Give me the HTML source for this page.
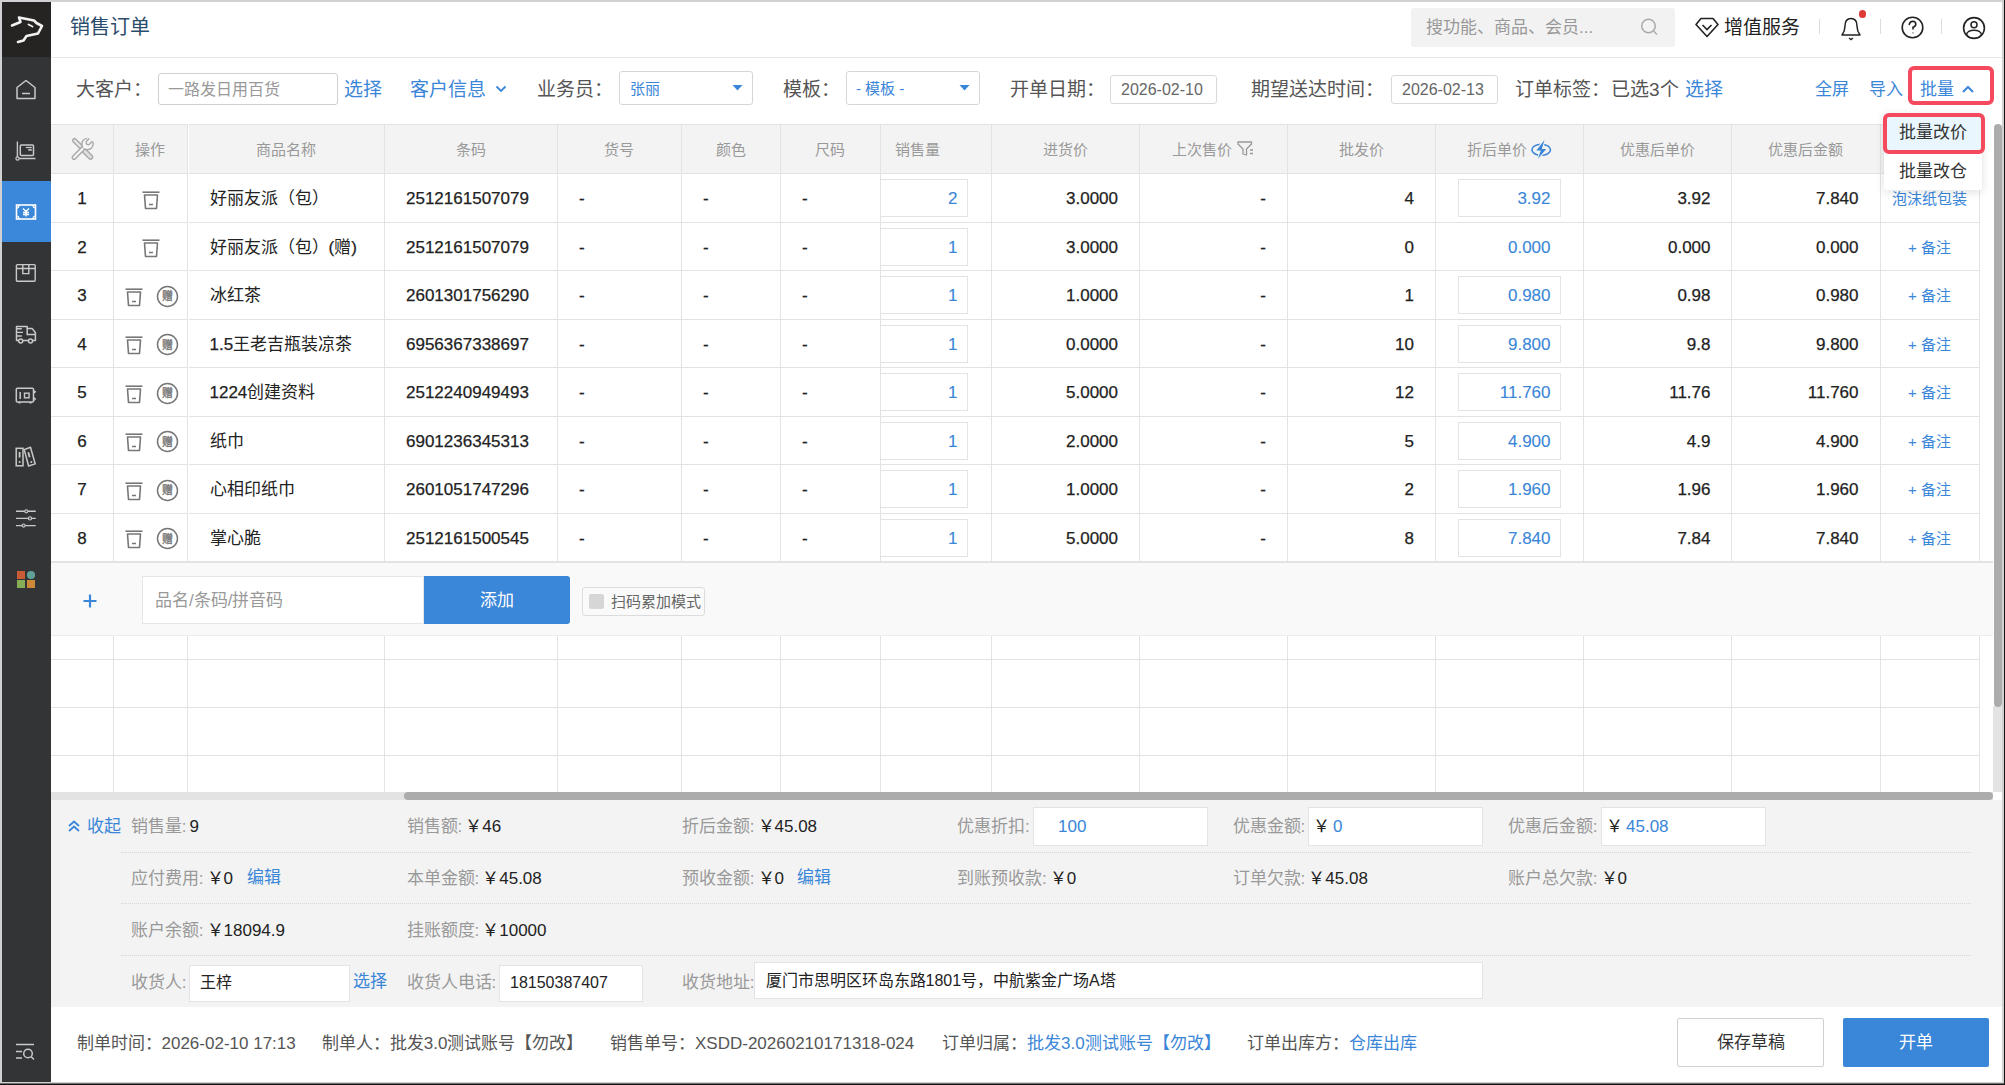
<!DOCTYPE html><html lang="zh-CN"><head><meta charset="utf-8"><style>
*{margin:0;padding:0;box-sizing:border-box}
html,body{width:2005px;height:1085px;overflow:hidden;background:#fff}
body{position:relative;font-family:"Liberation Sans",sans-serif}
.a{position:absolute;white-space:nowrap}
.c{-webkit-text-stroke:0}
</style></head><body>
<div class="a" style="left:0px;top:0px;width:2005px;height:2px;background:#d1d0d2"></div>
<div class="a" style="left:0px;top:0px;width:2px;height:1085px;background:#d1d0d2"></div>
<div class="a" style="left:2002px;top:0px;width:2px;height:1085px;background:#d1d0d2"></div>
<div class="a" style="left:2004px;top:0px;width:1px;height:1085px;background:#151515"></div>
<div class="a" style="left:0px;top:1082px;width:2004px;height:1px;background:#d1d0d2"></div>
<div class="a" style="left:0px;top:1083px;width:2004px;height:1px;background:#707070"></div>
<div class="a" style="left:0px;top:1084px;width:2005px;height:1px;background:#151515"></div>
<div class="a" style="left:2px;top:2px;width:49px;height:1080px;background:#333436"></div>
<div class="a" style="left:2px;top:2px;width:49px;height:55px;background:#252423"></div>
<div class="a" style="left:2px;top:181px;width:49px;height:61px;background:#3b87d9"></div>
<svg class="a" style="left:2px;top:2px;" width="49" height="55" viewBox="0 0 49 55" fill="none"><path d="M10 23.5 L18.5 20 L17 15.5 L32 18.5 L34.5 21 L40 24 L36 31.5 L24.5 34 L21.5 38.5 L16 40" stroke="#f2f2f2" stroke-width="2.6" stroke-linejoin="round" stroke-linecap="round"/><path d="M26.5 22.5 L30.5 24.5" stroke="#f2f2f2" stroke-width="1.8" stroke-linecap="round"/></svg>
<svg class="a" style="left:14px;top:78px;" width="24" height="24" viewBox="0 0 24 24" fill="none"><path d="M3 9.5 L12 2.5 L21 9.5 V20.5 H3 Z" stroke="#c9c9c9" stroke-width="1.5" stroke-linejoin="round"/><path d="M8 15.5 H16" stroke="#c9c9c9" stroke-width="1.5"/></svg>
<svg class="a" style="left:14px;top:139px;" width="24" height="24" viewBox="0 0 24 24" fill="none"><path d="M3.4 2.5 V19.5 H21.5" stroke="#c9c9c9" stroke-width="1.4"/><rect x="6.3" y="5.9" width="13.2" height="10.6" rx="1" stroke="#c9c9c9" stroke-width="1.5"/><path d="M11.8 8.5 H17.8" stroke="#c9c9c9" stroke-width="1.3"/><path d="M14.2 10.9 H17.8" stroke="#c9c9c9" stroke-width="1.6"/><circle cx="3.5" cy="19.5" r="1.6" fill="#333436" stroke="#c9c9c9" stroke-width="1.2"/></svg>
<svg class="a" style="left:14px;top:200px;" width="24" height="24" viewBox="0 0 24 24" fill="none"><rect x="2.5" y="5" width="19" height="14" stroke="#fff" stroke-width="1.6"/><path d="M9 8.5 L12 11.5 L15 8.5 M12 11.5 V16.5 M9 12.5 H15 M9 14.5 H15" stroke="#fff" stroke-width="1.4"/><path d="M2.5 8 Q5 8 5 5 M21.5 8 Q19 8 19 5 M2.5 16 Q5 16 5 19 M21.5 16 Q19 16 19 19" stroke="#fff" stroke-width="1.2"/></svg>
<svg class="a" style="left:14px;top:261px;" width="24" height="24" viewBox="0 0 24 24" fill="none"><rect x="2.4" y="3.6" width="18.8" height="16.7" rx="1" stroke="#c9c9c9" stroke-width="1.4"/><path d="M2.4 7.5 H21.2 M8.8 3.6 V12.6 H14.8 V3.6" stroke="#c9c9c9" stroke-width="1.4"/></svg>
<svg class="a" style="left:14px;top:322px;" width="24" height="24" viewBox="0 0 24 24" fill="none"><path d="M2.5 18.5 V4.5 H13.2 V6.6 H18.3 L21.4 10.8 V18.5 Z" stroke="#c9c9c9" stroke-width="1.5" stroke-linejoin="round"/><path d="M13.2 6.6 V12.5 H21.4" stroke="#c9c9c9" stroke-width="1.5"/><path d="M3 6.8 H7.8 M3 10.4 H9 M3 14 H7.8" stroke="#c9c9c9" stroke-width="1.4"/><circle cx="6.7" cy="19" r="2" fill="#333436" stroke="#c9c9c9" stroke-width="1.5"/><circle cx="16.5" cy="19" r="2" fill="#333436" stroke="#c9c9c9" stroke-width="1.5"/></svg>
<svg class="a" style="left:14px;top:384px;" width="24" height="24" viewBox="0 0 24 24" fill="none"><rect x="2.3" y="4.3" width="17.2" height="13.8" rx="1" stroke="#c9c9c9" stroke-width="1.5"/><path d="M19.5 6.5 L21.4 7.8 L19.5 9.2 M19.5 13.6 L21.4 15 L19.5 16.4" stroke="#c9c9c9" stroke-width="1.4" stroke-linejoin="round"/><path d="M6.2 8 V15" stroke="#c9c9c9" stroke-width="1.5"/><path d="M5.5 18.1 V19.6 M16.5 18.1 V19.6" stroke="#c9c9c9" stroke-width="2"/><rect x="10.5" y="9.2" width="4.6" height="4.6" stroke="#c9c9c9" stroke-width="1.4"/></svg>
<svg class="a" style="left:14px;top:445px;" width="24" height="24" viewBox="0 0 24 24" fill="none"><rect x="2.2" y="3.3" width="6.8" height="17.5" stroke="#c9c9c9" stroke-width="1.5"/><path d="M10.2 4.6 L16.5 2.2 L21.2 18.9 L14.6 21 Z" stroke="#c9c9c9" stroke-width="1.5" stroke-linejoin="round"/><path d="M5.6 7 V12.5 M14.3 7.2 L15.6 12.3" stroke="#c9c9c9" stroke-width="1.8"/><circle cx="5.6" cy="17" r="1" fill="#c9c9c9"/><circle cx="17.3" cy="17" r="1" fill="#c9c9c9"/></svg>
<svg class="a" style="left:14px;top:507px;" width="24" height="24" viewBox="0 0 24 24" fill="none"><path d="M2 4.3 H21.7 M2 11.4 H21.7 M2 18.6 H21.7" stroke="#c9c9c9" stroke-width="1.4"/><circle cx="12.3" cy="4.3" r="1.6" fill="#555" stroke="#c9c9c9" stroke-width="1.1"/><circle cx="16" cy="11.4" r="1.6" fill="#555" stroke="#c9c9c9" stroke-width="1.1"/><circle cx="9.6" cy="18.6" r="1.6" fill="#555" stroke="#c9c9c9" stroke-width="1.1"/></svg>
<div class="a" style="left:17px;top:571px;width:7.5px;height:7.5px;background:#c95b36"></div>
<div class="a" style="left:27px;top:571px;width:7.5px;height:7.5px;background:#5fa195;border-radius:50%"></div>
<div class="a" style="left:17px;top:580px;width:7.5px;height:7.5px;background:#85ae55"></div>
<div class="a" style="left:27px;top:580px;width:7.5px;height:7.5px;background:#cc8a38"></div>
<svg class="a" style="left:14px;top:1041px;" width="24" height="24" viewBox="0 0 24 24" fill="none"><path d="M2 3.5 H20 M2 10.5 H8 M2 17 H8" stroke="#c9c9c9" stroke-width="1.5"/><circle cx="14" cy="12.5" r="4.3" stroke="#c9c9c9" stroke-width="1.5"/><path d="M17.2 15.7 L20 18.5" stroke="#c9c9c9" stroke-width="1.5"/></svg>
<div class="a" style="left:51px;top:57px;width:1951px;height:1px;background:#e8e8e8"></div>
<div class="a" style="left:70px;top:12.3px;line-height:30px;font-size:20px;color:#2c4c6c;"><span class="c">销售订单</span></div>
<div class="a" style="left:1411px;top:8px;width:264px;height:39px;background:#f2f2f2;border-radius:3px"></div>
<div class="a" style="left:1426px;top:13.3px;line-height:30px;font-size:17px;color:#999;-webkit-text-stroke:0;"><span class="c">搜功能、商品、会员</span>...</div>
<svg class="a" style="left:1638px;top:16px;" width="24" height="24" viewBox="0 0 24 24" fill="none"><circle cx="10.5" cy="10" r="6.8" stroke="#aaa" stroke-width="1.5"/><path d="M15.5 15 L19 18.5" stroke="#aaa" stroke-width="1.5"/></svg>
<svg class="a" style="left:1694px;top:16px;" width="26" height="24" viewBox="0 0 26 24" fill="none"><path d="M7 2.5 H19 L24 8.5 L13 20.5 L2 8.5 Z" stroke="#222" stroke-width="1.6" stroke-linejoin="round"/><path d="M8.5 9 L13 13.5 L17.5 9" stroke="#222" stroke-width="1.6"/></svg>
<div class="a" style="left:1724px;top:13.3px;line-height:30px;font-size:19px;color:#222;"><span class="c">增值服务</span></div>
<div class="a" style="left:1819px;top:19px;width:1px;height:15px;background:#ddd"></div>
<div class="a" style="left:1880px;top:19px;width:1px;height:15px;background:#ddd"></div>
<div class="a" style="left:1941px;top:19px;width:1px;height:15px;background:#ddd"></div>
<svg class="a" style="left:1838px;top:14px;" width="28" height="28" viewBox="0 0 28 28" fill="none"><path d="M4 21 Q7 17 7 12 Q7 4.5 13 4.5 Q19 4.5 19 12 Q19 17 22 21 Z" stroke="#222" stroke-width="1.5" stroke-linejoin="round"/><path d="M11 24 L13 25.5 L15 24" stroke="#222" stroke-width="1.4"/></svg>
<div class="a" style="left:1858.5px;top:10.2px;width:7.6px;height:7.6px;background:#e0393a;border-radius:50%"></div>
<svg class="a" style="left:1900px;top:15px;" width="26" height="26" viewBox="0 0 26 26" fill="none"><circle cx="12.5" cy="12.5" r="10.3" stroke="#222" stroke-width="1.6"/><path d="M9.3 9.5 Q9.8 6.3 12.8 6.3 Q15.8 6.5 15.8 9.2 Q15.8 11.3 13 12.3 L13 14" stroke="#222" stroke-width="1.6" stroke-linecap="round"/><circle cx="13" cy="17.8" r="0.6" fill="#222"/></svg>
<svg class="a" style="left:1961px;top:15px;" width="26" height="26" viewBox="0 0 26 26" fill="none"><defs><clipPath id="uc"><circle cx="13" cy="13" r="10.4"/></clipPath></defs><circle cx="13" cy="13" r="10.4" stroke="#222" stroke-width="1.6"/><circle cx="13" cy="9.8" r="3" stroke="#222" stroke-width="1.5"/><ellipse cx="13" cy="19.5" rx="7.3" ry="4.3" stroke="#222" stroke-width="1.5" clip-path="url(#uc)"/></svg>
<div class="a" style="left:76px;top:75.3px;line-height:30px;font-size:19px;color:#555;"><span class="c">大客户：</span></div>
<div class="a" style="left:158px;top:73px;width:180px;height:32px;border:1px solid #d0d0d0;border-radius:3px;background:#fff"></div>
<div class="a" style="left:168px;top:75.3px;line-height:30px;font-size:16px;color:#999;-webkit-text-stroke:0;"><span class="c">一路发日用百货</span></div>
<div class="a" style="left:344px;top:75.3px;line-height:30px;font-size:19px;color:#3a86d8;"><span class="c">选择</span></div>
<div class="a" style="left:410px;top:75.3px;line-height:30px;font-size:19px;color:#3a86d8;"><span class="c">客户信息</span></div>
<svg class="a" style="left:494px;top:82px;" width="14" height="14" viewBox="0 0 14 14" fill="none"><path d="M2.5 4.5 L7 9 L11.5 4.5" stroke="#3a86d8" stroke-width="1.8"/></svg>
<div class="a" style="left:536.5px;top:75.3px;line-height:30px;font-size:19px;color:#555;"><span class="c">业务员：</span></div>
<div class="a" style="left:619px;top:71px;width:134px;height:34px;border:1px solid #d6d6d6;border-radius:3px;background:#fff"></div>
<div class="a" style="left:630px;top:74.3px;line-height:30px;font-size:15px;color:#3a86d8;"><span class="c">张丽</span></div>
<svg class="a" style="left:732px;top:84px;" width="12" height="8" viewBox="0 0 12 8" fill="none"><path d="M0.5 1 H10.5 L5.5 6.5 Z" fill="#3a86d8"/></svg>
<div class="a" style="left:782.5px;top:75.3px;line-height:30px;font-size:19px;color:#555;"><span class="c">模板：</span></div>
<div class="a" style="left:846px;top:71px;width:134px;height:34px;border:1px solid #d6d6d6;border-radius:3px;background:#fff"></div>
<div class="a" style="left:856px;top:74.3px;line-height:30px;font-size:15px;color:#3a86d8;">- <span class="c">模板</span> -</div>
<svg class="a" style="left:959px;top:84px;" width="12" height="8" viewBox="0 0 12 8" fill="none"><path d="M0.5 1 H10.5 L5.5 6.5 Z" fill="#3a86d8"/></svg>
<div class="a" style="left:1010px;top:75.3px;line-height:30px;font-size:19px;color:#555;"><span class="c">开单日期：</span></div>
<div class="a" style="left:1110px;top:75px;width:107px;height:29px;border:1px solid #dadada;border-radius:3px;background:#fff"></div>
<div class="a" style="left:1121px;top:75.3px;line-height:30px;font-size:16px;color:#666;">2026-02-10</div>
<div class="a" style="left:1251px;top:75.3px;line-height:30px;font-size:19px;color:#555;"><span class="c">期望送达时间：</span></div>
<div class="a" style="left:1391px;top:75px;width:107px;height:29px;border:1px solid #dadada;border-radius:3px;background:#fff"></div>
<div class="a" style="left:1402px;top:75.3px;line-height:30px;font-size:16px;color:#666;">2026-02-13</div>
<div class="a" style="left:1515px;top:75.3px;line-height:30px;font-size:19px;color:#555;"><span class="c">订单标签：</span></div>
<div class="a" style="left:1611px;top:75.3px;line-height:30px;font-size:19px;color:#555;"><span class="c">已选</span>3<span class="c">个</span></div>
<div class="a" style="left:1685px;top:75.3px;line-height:30px;font-size:19px;color:#3a86d8;"><span class="c">选择</span></div>
<div class="a" style="left:1815px;top:75.3px;line-height:30px;font-size:17px;color:#3a86d8;"><span class="c">全屏</span></div>
<div class="a" style="left:1869px;top:75.3px;line-height:30px;font-size:17px;color:#3a86d8;"><span class="c">导入</span></div>
<div class="a" style="left:1920px;top:75.3px;line-height:30px;font-size:17px;color:#3a86d8;"><span class="c">批量</span></div>
<svg class="a" style="left:1960px;top:83px;" width="16" height="12" viewBox="0 0 16 12" fill="none"><path d="M3 9 L8 4 L13 9" stroke="#3a86d8" stroke-width="2"/></svg>
<div class="a" style="left:1908px;top:66px;width:86px;height:39px;border:4px solid #f5495e;border-radius:6px"></div>
<div class="a" style="left:51px;top:124px;width:1928px;height:49.5px;background:#f3f3f3"></div>
<div class="a" style="left:51px;top:124px;width:1928px;height:1px;background:#e3e3e3"></div>
<div class="a" style="left:51px;top:173px;width:1928px;height:1px;background:#e3e3e3"></div>
<svg class="a" style="left:69px;top:136px;" width="26" height="26" viewBox="0 0 26 26" fill="none"><path d="M5.5 4.5 L11.5 10.5" stroke="#a8a8a8" stroke-width="5.2" stroke-linecap="round"/><path d="M5.5 4.5 L11.5 10.5" stroke="#e6e6e6" stroke-width="2.4" stroke-linecap="round"/><path d="M15.5 15 L21.5 21" stroke="#a8a8a8" stroke-width="5.6" stroke-linecap="round"/><path d="M15.5 15 L21.5 21" stroke="#dedede" stroke-width="2.8" stroke-linecap="round"/><path d="M5 21.5 L14.5 12" stroke="#a8a8a8" stroke-width="5" stroke-linecap="round"/><path d="M5 21.5 L14.5 12" stroke="#f6f6f6" stroke-width="2.2" stroke-linecap="round"/><circle cx="18.5" cy="8" r="5.6" fill="#f6f6f6" stroke="#a8a8a8" stroke-width="1.4"/><path d="M18.3 1.5 L17.3 6.5 L18.5 9 L21.5 8.7 L25 4.5 L23.5 0 Z" fill="#f3f3f3"/><path d="M20.3 2.4 L17.2 5.6 Q16.8 8.7 19.8 8.8 L23.5 5.3" stroke="#a8a8a8" stroke-width="1.4" fill="none" stroke-linejoin="round"/><path d="M14.5 12 L16.5 10" stroke="#f6f6f6" stroke-width="2.2"/></svg>
<div class="a" style="left:-50.0px;width:400px;text-align:center;top:134.8px;line-height:30px;font-size:15px;color:#999;-webkit-text-stroke:0;"><span class="c">操作</span></div>
<div class="a" style="left:85.5px;width:400px;text-align:center;top:134.8px;line-height:30px;font-size:15px;color:#999;-webkit-text-stroke:0;"><span class="c">商品名称</span></div>
<div class="a" style="left:270.5px;width:400px;text-align:center;top:134.8px;line-height:30px;font-size:15px;color:#999;-webkit-text-stroke:0;"><span class="c">条码</span></div>
<div class="a" style="left:419.0px;width:400px;text-align:center;top:134.8px;line-height:30px;font-size:15px;color:#999;-webkit-text-stroke:0;"><span class="c">货号</span></div>
<div class="a" style="left:530.5px;width:400px;text-align:center;top:134.8px;line-height:30px;font-size:15px;color:#999;-webkit-text-stroke:0;"><span class="c">颜色</span></div>
<div class="a" style="left:630.0px;width:400px;text-align:center;top:134.8px;line-height:30px;font-size:15px;color:#999;-webkit-text-stroke:0;"><span class="c">尺码</span></div>
<div class="a" style="left:865.0px;width:400px;text-align:center;top:134.8px;line-height:30px;font-size:15px;color:#999;-webkit-text-stroke:0;"><span class="c">进货价</span></div>
<div class="a" style="left:1161.0px;width:400px;text-align:center;top:134.8px;line-height:30px;font-size:15px;color:#999;-webkit-text-stroke:0;"><span class="c">批发价</span></div>
<div class="a" style="left:1457.0px;width:400px;text-align:center;top:134.8px;line-height:30px;font-size:15px;color:#999;-webkit-text-stroke:0;"><span class="c">优惠后单价</span></div>
<div class="a" style="left:1605.5px;width:400px;text-align:center;top:134.8px;line-height:30px;font-size:15px;color:#999;-webkit-text-stroke:0;"><span class="c">优惠后金额</span></div>
<div class="a" style="left:895px;top:134.8px;line-height:30px;font-size:15px;color:#999;-webkit-text-stroke:0;"><span class="c">销售量</span></div>
<div class="a" style="left:1002px;width:400px;text-align:center;top:134.8px;line-height:30px;font-size:15px;color:#999;-webkit-text-stroke:0;"><span class="c">上次售价</span></div>
<svg class="a" style="left:1236px;top:140px;" width="20" height="18" viewBox="0 0 20 18" fill="none"><path d="M2 2 H15.5 V4 L10.5 9 V15 L7 14 V9 L2 4 Z" stroke="#999" stroke-width="1.3" stroke-linejoin="round"/><path d="M14 10 H17 M14 13.5 H17" stroke="#999" stroke-width="1.3"/></svg>
<div class="a" style="left:1297px;width:400px;text-align:center;top:134.8px;line-height:30px;font-size:15px;color:#999;-webkit-text-stroke:0;"><span class="c">折后单价</span></div>
<svg class="a" style="left:1529px;top:138px;" width="24" height="23" viewBox="0 0 24 23" fill="none"><ellipse cx="12.2" cy="11.8" rx="9.3" ry="5.5" stroke="#3a86d8" stroke-width="1.6"/><path d="M15.5 2 L7.3 12.6 H11.8 L9 20.8 L17.2 11.1 H12.8 Z" stroke="#f3f3f3" stroke-width="2.2" stroke-linejoin="round"/><path d="M15.5 2 L7.3 12.6 H11.8 L9 20.8 L17.2 11.1 H12.8 Z" fill="#3a86d8"/></svg>
<div class="a" style="left:51px;top:221.5px;width:1928px;height:1px;background:#e3e3e3"></div>
<div class="a" style="left:-118px;width:400px;text-align:center;top:184.05px;line-height:30px;font-size:17px;color:#222;-webkit-text-stroke:0.25px #222;">1</div>
<svg class="a" style="left:140.5px;top:189.95px;" width="20" height="20" viewBox="0 0 20 20" fill="none"><path d="M1.5 2.2 H18.5" stroke="#777" stroke-width="1.6"/><path d="M3.5 5 H16.5 L15.5 18.5 H4.5 Z" stroke="#777" stroke-width="1.6" stroke-linejoin="round"/><path d="M8 14.5 H12" stroke="#777" stroke-width="1.5"/></svg>
<div class="a" style="left:209.5px;top:184.05px;line-height:30px;font-size:17px;color:#222;-webkit-text-stroke:0.25px #222;"><span class="c">好丽友派（包）</span></div>
<div class="a" style="left:406px;top:184.05px;line-height:30px;font-size:17px;color:#222;-webkit-text-stroke:0.25px #222;">2512161507079</div>
<div class="a" style="left:579px;top:184.05px;line-height:30px;font-size:17px;color:#222;-webkit-text-stroke:0.25px #222;">-</div>
<div class="a" style="left:703px;top:184.05px;line-height:30px;font-size:17px;color:#222;-webkit-text-stroke:0.25px #222;">-</div>
<div class="a" style="left:802px;top:184.05px;line-height:30px;font-size:17px;color:#222;-webkit-text-stroke:0.25px #222;">-</div>
<div class="a" style="left:880px;top:179.0px;width:88px;height:38px;border:1px solid #e3e3e3;border-left:none;background:#fff"></div>
<div class="a" style="right:1047.5px;top:184.05px;line-height:30px;font-size:17px;color:#3a86d8;-webkit-text-stroke:0.1px #3a86d8;">2</div>
<div class="a" style="right:887px;top:184.05px;line-height:30px;font-size:17px;color:#222;-webkit-text-stroke:0.25px #222;">3.0000</div>
<div class="a" style="right:739px;top:184.05px;line-height:30px;font-size:17px;color:#222;-webkit-text-stroke:0.25px #222;">-</div>
<div class="a" style="right:591px;top:184.05px;line-height:30px;font-size:17px;color:#222;-webkit-text-stroke:0.25px #222;">4</div>
<div class="a" style="left:1458px;top:179.0px;width:103px;height:38px;border:1px solid #e3e3e3;background:#fff"></div>
<div class="a" style="right:454.5px;top:184.05px;line-height:30px;font-size:17px;color:#3a86d8;-webkit-text-stroke:0.1px #3a86d8;">3.92</div>
<div class="a" style="right:294.5px;top:184.05px;line-height:30px;font-size:17px;color:#222;-webkit-text-stroke:0.25px #222;">3.92</div>
<div class="a" style="right:146.5px;top:184.05px;line-height:30px;font-size:17px;color:#222;-webkit-text-stroke:0.25px #222;">7.840</div>
<div class="a" style="left:1729.5px;width:400px;text-align:center;top:184.05px;line-height:30px;font-size:15px;color:#3a86d8;"><span class="c">泡沫纸包装</span></div>
<div class="a" style="left:51px;top:270.0px;width:1928px;height:1px;background:#e3e3e3"></div>
<div class="a" style="left:-118px;width:400px;text-align:center;top:232.55px;line-height:30px;font-size:17px;color:#222;-webkit-text-stroke:0.25px #222;">2</div>
<svg class="a" style="left:140.5px;top:238.45px;" width="20" height="20" viewBox="0 0 20 20" fill="none"><path d="M1.5 2.2 H18.5" stroke="#777" stroke-width="1.6"/><path d="M3.5 5 H16.5 L15.5 18.5 H4.5 Z" stroke="#777" stroke-width="1.6" stroke-linejoin="round"/><path d="M8 14.5 H12" stroke="#777" stroke-width="1.5"/></svg>
<div class="a" style="left:209.5px;top:232.55px;line-height:30px;font-size:17px;color:#222;-webkit-text-stroke:0.25px #222;"><span class="c">好丽友派（包）</span>(<span class="c">赠</span>)</div>
<div class="a" style="left:406px;top:232.55px;line-height:30px;font-size:17px;color:#222;-webkit-text-stroke:0.25px #222;">2512161507079</div>
<div class="a" style="left:579px;top:232.55px;line-height:30px;font-size:17px;color:#222;-webkit-text-stroke:0.25px #222;">-</div>
<div class="a" style="left:703px;top:232.55px;line-height:30px;font-size:17px;color:#222;-webkit-text-stroke:0.25px #222;">-</div>
<div class="a" style="left:802px;top:232.55px;line-height:30px;font-size:17px;color:#222;-webkit-text-stroke:0.25px #222;">-</div>
<div class="a" style="left:880px;top:227.5px;width:88px;height:38px;border:1px solid #e3e3e3;border-left:none;background:#fff"></div>
<div class="a" style="right:1047.5px;top:232.55px;line-height:30px;font-size:17px;color:#3a86d8;-webkit-text-stroke:0.1px #3a86d8;">1</div>
<div class="a" style="right:887px;top:232.55px;line-height:30px;font-size:17px;color:#222;-webkit-text-stroke:0.25px #222;">3.0000</div>
<div class="a" style="right:739px;top:232.55px;line-height:30px;font-size:17px;color:#222;-webkit-text-stroke:0.25px #222;">-</div>
<div class="a" style="right:591px;top:232.55px;line-height:30px;font-size:17px;color:#222;-webkit-text-stroke:0.25px #222;">0</div>
<div class="a" style="right:454.5px;top:232.55px;line-height:30px;font-size:17px;color:#3a86d8;-webkit-text-stroke:0.1px #3a86d8;">0.000</div>
<div class="a" style="right:294.5px;top:232.55px;line-height:30px;font-size:17px;color:#222;-webkit-text-stroke:0.25px #222;">0.000</div>
<div class="a" style="right:146.5px;top:232.55px;line-height:30px;font-size:17px;color:#222;-webkit-text-stroke:0.25px #222;">0.000</div>
<div class="a" style="left:1729.5px;width:400px;text-align:center;top:232.55px;line-height:30px;font-size:15px;color:#3a86d8;">+ <span class="c">备注</span></div>
<div class="a" style="left:51px;top:318.5px;width:1928px;height:1px;background:#e3e3e3"></div>
<div class="a" style="left:-118px;width:400px;text-align:center;top:281.05px;line-height:30px;font-size:17px;color:#222;-webkit-text-stroke:0.25px #222;">3</div>
<svg class="a" style="left:124.30000000000001px;top:286.95px;" width="20" height="20" viewBox="0 0 20 20" fill="none"><path d="M1.5 2.2 H18.5" stroke="#777" stroke-width="1.6"/><path d="M3.5 5 H16.5 L15.5 18.5 H4.5 Z" stroke="#777" stroke-width="1.6" stroke-linejoin="round"/><path d="M8 14.5 H12" stroke="#777" stroke-width="1.5"/></svg>
<svg class="a" style="left:156.3px;top:284.85px;" width="23" height="23" viewBox="0 0 23 23" fill="none"><circle cx="11.5" cy="11.5" r="10" stroke="#777" stroke-width="1.5"/></svg>
<div class="a" style="left:157.8px;width:20px;text-align:center;top:289.35px;line-height:14px;font-size:11px;color:#777;-webkit-text-stroke:0.35px #777">赠</div>
<div class="a" style="left:209.5px;top:281.05px;line-height:30px;font-size:17px;color:#222;-webkit-text-stroke:0.25px #222;"><span class="c">冰红茶</span></div>
<div class="a" style="left:406px;top:281.05px;line-height:30px;font-size:17px;color:#222;-webkit-text-stroke:0.25px #222;">2601301756290</div>
<div class="a" style="left:579px;top:281.05px;line-height:30px;font-size:17px;color:#222;-webkit-text-stroke:0.25px #222;">-</div>
<div class="a" style="left:703px;top:281.05px;line-height:30px;font-size:17px;color:#222;-webkit-text-stroke:0.25px #222;">-</div>
<div class="a" style="left:802px;top:281.05px;line-height:30px;font-size:17px;color:#222;-webkit-text-stroke:0.25px #222;">-</div>
<div class="a" style="left:880px;top:276.0px;width:88px;height:38px;border:1px solid #e3e3e3;border-left:none;background:#fff"></div>
<div class="a" style="right:1047.5px;top:281.05px;line-height:30px;font-size:17px;color:#3a86d8;-webkit-text-stroke:0.1px #3a86d8;">1</div>
<div class="a" style="right:887px;top:281.05px;line-height:30px;font-size:17px;color:#222;-webkit-text-stroke:0.25px #222;">1.0000</div>
<div class="a" style="right:739px;top:281.05px;line-height:30px;font-size:17px;color:#222;-webkit-text-stroke:0.25px #222;">-</div>
<div class="a" style="right:591px;top:281.05px;line-height:30px;font-size:17px;color:#222;-webkit-text-stroke:0.25px #222;">1</div>
<div class="a" style="left:1458px;top:276.0px;width:103px;height:38px;border:1px solid #e3e3e3;background:#fff"></div>
<div class="a" style="right:454.5px;top:281.05px;line-height:30px;font-size:17px;color:#3a86d8;-webkit-text-stroke:0.1px #3a86d8;">0.980</div>
<div class="a" style="right:294.5px;top:281.05px;line-height:30px;font-size:17px;color:#222;-webkit-text-stroke:0.25px #222;">0.98</div>
<div class="a" style="right:146.5px;top:281.05px;line-height:30px;font-size:17px;color:#222;-webkit-text-stroke:0.25px #222;">0.980</div>
<div class="a" style="left:1729.5px;width:400px;text-align:center;top:281.05px;line-height:30px;font-size:15px;color:#3a86d8;">+ <span class="c">备注</span></div>
<div class="a" style="left:51px;top:367.0px;width:1928px;height:1px;background:#e3e3e3"></div>
<div class="a" style="left:-118px;width:400px;text-align:center;top:329.55px;line-height:30px;font-size:17px;color:#222;-webkit-text-stroke:0.25px #222;">4</div>
<svg class="a" style="left:124.30000000000001px;top:335.45px;" width="20" height="20" viewBox="0 0 20 20" fill="none"><path d="M1.5 2.2 H18.5" stroke="#777" stroke-width="1.6"/><path d="M3.5 5 H16.5 L15.5 18.5 H4.5 Z" stroke="#777" stroke-width="1.6" stroke-linejoin="round"/><path d="M8 14.5 H12" stroke="#777" stroke-width="1.5"/></svg>
<svg class="a" style="left:156.3px;top:333.35px;" width="23" height="23" viewBox="0 0 23 23" fill="none"><circle cx="11.5" cy="11.5" r="10" stroke="#777" stroke-width="1.5"/></svg>
<div class="a" style="left:157.8px;width:20px;text-align:center;top:337.85px;line-height:14px;font-size:11px;color:#777;-webkit-text-stroke:0.35px #777">赠</div>
<div class="a" style="left:209.5px;top:329.55px;line-height:30px;font-size:17px;color:#222;-webkit-text-stroke:0.25px #222;">1.5<span class="c">王老吉瓶装凉茶</span></div>
<div class="a" style="left:406px;top:329.55px;line-height:30px;font-size:17px;color:#222;-webkit-text-stroke:0.25px #222;">6956367338697</div>
<div class="a" style="left:579px;top:329.55px;line-height:30px;font-size:17px;color:#222;-webkit-text-stroke:0.25px #222;">-</div>
<div class="a" style="left:703px;top:329.55px;line-height:30px;font-size:17px;color:#222;-webkit-text-stroke:0.25px #222;">-</div>
<div class="a" style="left:802px;top:329.55px;line-height:30px;font-size:17px;color:#222;-webkit-text-stroke:0.25px #222;">-</div>
<div class="a" style="left:880px;top:324.5px;width:88px;height:38px;border:1px solid #e3e3e3;border-left:none;background:#fff"></div>
<div class="a" style="right:1047.5px;top:329.55px;line-height:30px;font-size:17px;color:#3a86d8;-webkit-text-stroke:0.1px #3a86d8;">1</div>
<div class="a" style="right:887px;top:329.55px;line-height:30px;font-size:17px;color:#222;-webkit-text-stroke:0.25px #222;">0.0000</div>
<div class="a" style="right:739px;top:329.55px;line-height:30px;font-size:17px;color:#222;-webkit-text-stroke:0.25px #222;">-</div>
<div class="a" style="right:591px;top:329.55px;line-height:30px;font-size:17px;color:#222;-webkit-text-stroke:0.25px #222;">10</div>
<div class="a" style="left:1458px;top:324.5px;width:103px;height:38px;border:1px solid #e3e3e3;background:#fff"></div>
<div class="a" style="right:454.5px;top:329.55px;line-height:30px;font-size:17px;color:#3a86d8;-webkit-text-stroke:0.1px #3a86d8;">9.800</div>
<div class="a" style="right:294.5px;top:329.55px;line-height:30px;font-size:17px;color:#222;-webkit-text-stroke:0.25px #222;">9.8</div>
<div class="a" style="right:146.5px;top:329.55px;line-height:30px;font-size:17px;color:#222;-webkit-text-stroke:0.25px #222;">9.800</div>
<div class="a" style="left:1729.5px;width:400px;text-align:center;top:329.55px;line-height:30px;font-size:15px;color:#3a86d8;">+ <span class="c">备注</span></div>
<div class="a" style="left:51px;top:415.5px;width:1928px;height:1px;background:#e3e3e3"></div>
<div class="a" style="left:-118px;width:400px;text-align:center;top:378.05px;line-height:30px;font-size:17px;color:#222;-webkit-text-stroke:0.25px #222;">5</div>
<svg class="a" style="left:124.30000000000001px;top:383.95px;" width="20" height="20" viewBox="0 0 20 20" fill="none"><path d="M1.5 2.2 H18.5" stroke="#777" stroke-width="1.6"/><path d="M3.5 5 H16.5 L15.5 18.5 H4.5 Z" stroke="#777" stroke-width="1.6" stroke-linejoin="round"/><path d="M8 14.5 H12" stroke="#777" stroke-width="1.5"/></svg>
<svg class="a" style="left:156.3px;top:381.85px;" width="23" height="23" viewBox="0 0 23 23" fill="none"><circle cx="11.5" cy="11.5" r="10" stroke="#777" stroke-width="1.5"/></svg>
<div class="a" style="left:157.8px;width:20px;text-align:center;top:386.35px;line-height:14px;font-size:11px;color:#777;-webkit-text-stroke:0.35px #777">赠</div>
<div class="a" style="left:209.5px;top:378.05px;line-height:30px;font-size:17px;color:#222;-webkit-text-stroke:0.25px #222;">1224<span class="c">创建资料</span></div>
<div class="a" style="left:406px;top:378.05px;line-height:30px;font-size:17px;color:#222;-webkit-text-stroke:0.25px #222;">2512240949493</div>
<div class="a" style="left:579px;top:378.05px;line-height:30px;font-size:17px;color:#222;-webkit-text-stroke:0.25px #222;">-</div>
<div class="a" style="left:703px;top:378.05px;line-height:30px;font-size:17px;color:#222;-webkit-text-stroke:0.25px #222;">-</div>
<div class="a" style="left:802px;top:378.05px;line-height:30px;font-size:17px;color:#222;-webkit-text-stroke:0.25px #222;">-</div>
<div class="a" style="left:880px;top:373.0px;width:88px;height:38px;border:1px solid #e3e3e3;border-left:none;background:#fff"></div>
<div class="a" style="right:1047.5px;top:378.05px;line-height:30px;font-size:17px;color:#3a86d8;-webkit-text-stroke:0.1px #3a86d8;">1</div>
<div class="a" style="right:887px;top:378.05px;line-height:30px;font-size:17px;color:#222;-webkit-text-stroke:0.25px #222;">5.0000</div>
<div class="a" style="right:739px;top:378.05px;line-height:30px;font-size:17px;color:#222;-webkit-text-stroke:0.25px #222;">-</div>
<div class="a" style="right:591px;top:378.05px;line-height:30px;font-size:17px;color:#222;-webkit-text-stroke:0.25px #222;">12</div>
<div class="a" style="left:1458px;top:373.0px;width:103px;height:38px;border:1px solid #e3e3e3;background:#fff"></div>
<div class="a" style="right:454.5px;top:378.05px;line-height:30px;font-size:17px;color:#3a86d8;-webkit-text-stroke:0.1px #3a86d8;">11.760</div>
<div class="a" style="right:294.5px;top:378.05px;line-height:30px;font-size:17px;color:#222;-webkit-text-stroke:0.25px #222;">11.76</div>
<div class="a" style="right:146.5px;top:378.05px;line-height:30px;font-size:17px;color:#222;-webkit-text-stroke:0.25px #222;">11.760</div>
<div class="a" style="left:1729.5px;width:400px;text-align:center;top:378.05px;line-height:30px;font-size:15px;color:#3a86d8;">+ <span class="c">备注</span></div>
<div class="a" style="left:51px;top:464.0px;width:1928px;height:1px;background:#e3e3e3"></div>
<div class="a" style="left:-118px;width:400px;text-align:center;top:426.55px;line-height:30px;font-size:17px;color:#222;-webkit-text-stroke:0.25px #222;">6</div>
<svg class="a" style="left:124.30000000000001px;top:432.45px;" width="20" height="20" viewBox="0 0 20 20" fill="none"><path d="M1.5 2.2 H18.5" stroke="#777" stroke-width="1.6"/><path d="M3.5 5 H16.5 L15.5 18.5 H4.5 Z" stroke="#777" stroke-width="1.6" stroke-linejoin="round"/><path d="M8 14.5 H12" stroke="#777" stroke-width="1.5"/></svg>
<svg class="a" style="left:156.3px;top:430.35px;" width="23" height="23" viewBox="0 0 23 23" fill="none"><circle cx="11.5" cy="11.5" r="10" stroke="#777" stroke-width="1.5"/></svg>
<div class="a" style="left:157.8px;width:20px;text-align:center;top:434.85px;line-height:14px;font-size:11px;color:#777;-webkit-text-stroke:0.35px #777">赠</div>
<div class="a" style="left:209.5px;top:426.55px;line-height:30px;font-size:17px;color:#222;-webkit-text-stroke:0.25px #222;"><span class="c">纸巾</span></div>
<div class="a" style="left:406px;top:426.55px;line-height:30px;font-size:17px;color:#222;-webkit-text-stroke:0.25px #222;">6901236345313</div>
<div class="a" style="left:579px;top:426.55px;line-height:30px;font-size:17px;color:#222;-webkit-text-stroke:0.25px #222;">-</div>
<div class="a" style="left:703px;top:426.55px;line-height:30px;font-size:17px;color:#222;-webkit-text-stroke:0.25px #222;">-</div>
<div class="a" style="left:802px;top:426.55px;line-height:30px;font-size:17px;color:#222;-webkit-text-stroke:0.25px #222;">-</div>
<div class="a" style="left:880px;top:421.5px;width:88px;height:38px;border:1px solid #e3e3e3;border-left:none;background:#fff"></div>
<div class="a" style="right:1047.5px;top:426.55px;line-height:30px;font-size:17px;color:#3a86d8;-webkit-text-stroke:0.1px #3a86d8;">1</div>
<div class="a" style="right:887px;top:426.55px;line-height:30px;font-size:17px;color:#222;-webkit-text-stroke:0.25px #222;">2.0000</div>
<div class="a" style="right:739px;top:426.55px;line-height:30px;font-size:17px;color:#222;-webkit-text-stroke:0.25px #222;">-</div>
<div class="a" style="right:591px;top:426.55px;line-height:30px;font-size:17px;color:#222;-webkit-text-stroke:0.25px #222;">5</div>
<div class="a" style="left:1458px;top:421.5px;width:103px;height:38px;border:1px solid #e3e3e3;background:#fff"></div>
<div class="a" style="right:454.5px;top:426.55px;line-height:30px;font-size:17px;color:#3a86d8;-webkit-text-stroke:0.1px #3a86d8;">4.900</div>
<div class="a" style="right:294.5px;top:426.55px;line-height:30px;font-size:17px;color:#222;-webkit-text-stroke:0.25px #222;">4.9</div>
<div class="a" style="right:146.5px;top:426.55px;line-height:30px;font-size:17px;color:#222;-webkit-text-stroke:0.25px #222;">4.900</div>
<div class="a" style="left:1729.5px;width:400px;text-align:center;top:426.55px;line-height:30px;font-size:15px;color:#3a86d8;">+ <span class="c">备注</span></div>
<div class="a" style="left:51px;top:512.5px;width:1928px;height:1px;background:#e3e3e3"></div>
<div class="a" style="left:-118px;width:400px;text-align:center;top:475.05px;line-height:30px;font-size:17px;color:#222;-webkit-text-stroke:0.25px #222;">7</div>
<svg class="a" style="left:124.30000000000001px;top:480.95px;" width="20" height="20" viewBox="0 0 20 20" fill="none"><path d="M1.5 2.2 H18.5" stroke="#777" stroke-width="1.6"/><path d="M3.5 5 H16.5 L15.5 18.5 H4.5 Z" stroke="#777" stroke-width="1.6" stroke-linejoin="round"/><path d="M8 14.5 H12" stroke="#777" stroke-width="1.5"/></svg>
<svg class="a" style="left:156.3px;top:478.85px;" width="23" height="23" viewBox="0 0 23 23" fill="none"><circle cx="11.5" cy="11.5" r="10" stroke="#777" stroke-width="1.5"/></svg>
<div class="a" style="left:157.8px;width:20px;text-align:center;top:483.35px;line-height:14px;font-size:11px;color:#777;-webkit-text-stroke:0.35px #777">赠</div>
<div class="a" style="left:209.5px;top:475.05px;line-height:30px;font-size:17px;color:#222;-webkit-text-stroke:0.25px #222;"><span class="c">心相印纸巾</span></div>
<div class="a" style="left:406px;top:475.05px;line-height:30px;font-size:17px;color:#222;-webkit-text-stroke:0.25px #222;">2601051747296</div>
<div class="a" style="left:579px;top:475.05px;line-height:30px;font-size:17px;color:#222;-webkit-text-stroke:0.25px #222;">-</div>
<div class="a" style="left:703px;top:475.05px;line-height:30px;font-size:17px;color:#222;-webkit-text-stroke:0.25px #222;">-</div>
<div class="a" style="left:802px;top:475.05px;line-height:30px;font-size:17px;color:#222;-webkit-text-stroke:0.25px #222;">-</div>
<div class="a" style="left:880px;top:470.0px;width:88px;height:38px;border:1px solid #e3e3e3;border-left:none;background:#fff"></div>
<div class="a" style="right:1047.5px;top:475.05px;line-height:30px;font-size:17px;color:#3a86d8;-webkit-text-stroke:0.1px #3a86d8;">1</div>
<div class="a" style="right:887px;top:475.05px;line-height:30px;font-size:17px;color:#222;-webkit-text-stroke:0.25px #222;">1.0000</div>
<div class="a" style="right:739px;top:475.05px;line-height:30px;font-size:17px;color:#222;-webkit-text-stroke:0.25px #222;">-</div>
<div class="a" style="right:591px;top:475.05px;line-height:30px;font-size:17px;color:#222;-webkit-text-stroke:0.25px #222;">2</div>
<div class="a" style="left:1458px;top:470.0px;width:103px;height:38px;border:1px solid #e3e3e3;background:#fff"></div>
<div class="a" style="right:454.5px;top:475.05px;line-height:30px;font-size:17px;color:#3a86d8;-webkit-text-stroke:0.1px #3a86d8;">1.960</div>
<div class="a" style="right:294.5px;top:475.05px;line-height:30px;font-size:17px;color:#222;-webkit-text-stroke:0.25px #222;">1.96</div>
<div class="a" style="right:146.5px;top:475.05px;line-height:30px;font-size:17px;color:#222;-webkit-text-stroke:0.25px #222;">1.960</div>
<div class="a" style="left:1729.5px;width:400px;text-align:center;top:475.05px;line-height:30px;font-size:15px;color:#3a86d8;">+ <span class="c">备注</span></div>
<div class="a" style="left:51px;top:561.0px;width:1928px;height:1px;background:#e3e3e3"></div>
<div class="a" style="left:-118px;width:400px;text-align:center;top:523.55px;line-height:30px;font-size:17px;color:#222;-webkit-text-stroke:0.25px #222;">8</div>
<svg class="a" style="left:124.30000000000001px;top:529.45px;" width="20" height="20" viewBox="0 0 20 20" fill="none"><path d="M1.5 2.2 H18.5" stroke="#777" stroke-width="1.6"/><path d="M3.5 5 H16.5 L15.5 18.5 H4.5 Z" stroke="#777" stroke-width="1.6" stroke-linejoin="round"/><path d="M8 14.5 H12" stroke="#777" stroke-width="1.5"/></svg>
<svg class="a" style="left:156.3px;top:527.35px;" width="23" height="23" viewBox="0 0 23 23" fill="none"><circle cx="11.5" cy="11.5" r="10" stroke="#777" stroke-width="1.5"/></svg>
<div class="a" style="left:157.8px;width:20px;text-align:center;top:531.85px;line-height:14px;font-size:11px;color:#777;-webkit-text-stroke:0.35px #777">赠</div>
<div class="a" style="left:209.5px;top:523.55px;line-height:30px;font-size:17px;color:#222;-webkit-text-stroke:0.25px #222;"><span class="c">掌心脆</span></div>
<div class="a" style="left:406px;top:523.55px;line-height:30px;font-size:17px;color:#222;-webkit-text-stroke:0.25px #222;">2512161500545</div>
<div class="a" style="left:579px;top:523.55px;line-height:30px;font-size:17px;color:#222;-webkit-text-stroke:0.25px #222;">-</div>
<div class="a" style="left:703px;top:523.55px;line-height:30px;font-size:17px;color:#222;-webkit-text-stroke:0.25px #222;">-</div>
<div class="a" style="left:802px;top:523.55px;line-height:30px;font-size:17px;color:#222;-webkit-text-stroke:0.25px #222;">-</div>
<div class="a" style="left:880px;top:518.5px;width:88px;height:38px;border:1px solid #e3e3e3;border-left:none;background:#fff"></div>
<div class="a" style="right:1047.5px;top:523.55px;line-height:30px;font-size:17px;color:#3a86d8;-webkit-text-stroke:0.1px #3a86d8;">1</div>
<div class="a" style="right:887px;top:523.55px;line-height:30px;font-size:17px;color:#222;-webkit-text-stroke:0.25px #222;">5.0000</div>
<div class="a" style="right:739px;top:523.55px;line-height:30px;font-size:17px;color:#222;-webkit-text-stroke:0.25px #222;">-</div>
<div class="a" style="right:591px;top:523.55px;line-height:30px;font-size:17px;color:#222;-webkit-text-stroke:0.25px #222;">8</div>
<div class="a" style="left:1458px;top:518.5px;width:103px;height:38px;border:1px solid #e3e3e3;background:#fff"></div>
<div class="a" style="right:454.5px;top:523.55px;line-height:30px;font-size:17px;color:#3a86d8;-webkit-text-stroke:0.1px #3a86d8;">7.840</div>
<div class="a" style="right:294.5px;top:523.55px;line-height:30px;font-size:17px;color:#222;-webkit-text-stroke:0.25px #222;">7.84</div>
<div class="a" style="right:146.5px;top:523.55px;line-height:30px;font-size:17px;color:#222;-webkit-text-stroke:0.25px #222;">7.840</div>
<div class="a" style="left:1729.5px;width:400px;text-align:center;top:523.55px;line-height:30px;font-size:15px;color:#3a86d8;">+ <span class="c">备注</span></div>
<div class="a" style="left:51px;top:561.5px;width:1928px;height:74px;background:#f9f9f9"></div>
<div class="a" style="left:1979px;top:561.5px;width:14px;height:74px;background:#f9f9f9"></div>
<div class="a" style="left:51px;top:561px;width:1942px;height:2px;background:#e3e3e3"></div>
<div class="a" style="left:51px;top:635px;width:1942px;height:1px;background:#ececec"></div>
<svg class="a" style="left:80px;top:591px;" width="20" height="20" viewBox="0 0 20 20" fill="none"><path d="M10 3.5 V16.5 M3.5 10 H16.5" stroke="#3a86d8" stroke-width="2.2"/></svg>
<div class="a" style="left:142px;top:576px;width:282px;height:48px;border:1px solid #e6e6e6;background:#fff"></div>
<div class="a" style="left:155px;top:586.3px;line-height:30px;font-size:17px;color:#999;-webkit-text-stroke:0;"><span class="c">品名</span>/<span class="c">条码</span>/<span class="c">拼音码</span></div>
<div class="a" style="left:424px;top:576px;width:146px;height:48px;background:#3a86d8;border-radius:0 3px 3px 0"></div>
<div class="a" style="left:297px;width:400px;text-align:center;top:586.3px;line-height:30px;font-size:17px;color:#fff;"><span class="c">添加</span></div>
<div class="a" style="left:582px;top:587px;width:123px;height:29px;border:1px solid #dcdcdc;border-radius:3px;background:#fafafa"></div>
<div class="a" style="left:589px;top:594px;width:15px;height:15px;background:#d6d6d6;border-radius:2px"></div>
<div class="a" style="left:610.5px;top:587.3px;line-height:30px;font-size:15px;color:#666;"><span class="c">扫码累加模式</span></div>
<div class="a" style="left:51px;top:658.5px;width:1928px;height:1px;background:#e3e3e3"></div>
<div class="a" style="left:51px;top:706.5px;width:1928px;height:1px;background:#e3e3e3"></div>
<div class="a" style="left:51px;top:754.5px;width:1928px;height:1px;background:#e3e3e3"></div>
<div class="a" style="left:113px;top:124px;width:1px;height:437.5px;background:#e3e3e3"></div>
<div class="a" style="left:113px;top:636px;width:1px;height:156px;background:#e3e3e3"></div>
<div class="a" style="left:187px;top:124px;width:1px;height:437.5px;background:#e3e3e3"></div>
<div class="a" style="left:187px;top:636px;width:1px;height:156px;background:#e3e3e3"></div>
<div class="a" style="left:384px;top:124px;width:1px;height:437.5px;background:#e3e3e3"></div>
<div class="a" style="left:384px;top:636px;width:1px;height:156px;background:#e3e3e3"></div>
<div class="a" style="left:557px;top:124px;width:1px;height:437.5px;background:#e3e3e3"></div>
<div class="a" style="left:557px;top:636px;width:1px;height:156px;background:#e3e3e3"></div>
<div class="a" style="left:681px;top:124px;width:1px;height:437.5px;background:#e3e3e3"></div>
<div class="a" style="left:681px;top:636px;width:1px;height:156px;background:#e3e3e3"></div>
<div class="a" style="left:780px;top:124px;width:1px;height:437.5px;background:#e3e3e3"></div>
<div class="a" style="left:780px;top:636px;width:1px;height:156px;background:#e3e3e3"></div>
<div class="a" style="left:880px;top:124px;width:1px;height:437.5px;background:#e3e3e3"></div>
<div class="a" style="left:880px;top:636px;width:1px;height:156px;background:#e3e3e3"></div>
<div class="a" style="left:991px;top:124px;width:1px;height:437.5px;background:#e3e3e3"></div>
<div class="a" style="left:991px;top:636px;width:1px;height:156px;background:#e3e3e3"></div>
<div class="a" style="left:1139px;top:124px;width:1px;height:437.5px;background:#e3e3e3"></div>
<div class="a" style="left:1139px;top:636px;width:1px;height:156px;background:#e3e3e3"></div>
<div class="a" style="left:1287px;top:124px;width:1px;height:437.5px;background:#e3e3e3"></div>
<div class="a" style="left:1287px;top:636px;width:1px;height:156px;background:#e3e3e3"></div>
<div class="a" style="left:1435px;top:124px;width:1px;height:437.5px;background:#e3e3e3"></div>
<div class="a" style="left:1435px;top:636px;width:1px;height:156px;background:#e3e3e3"></div>
<div class="a" style="left:1583px;top:124px;width:1px;height:437.5px;background:#e3e3e3"></div>
<div class="a" style="left:1583px;top:636px;width:1px;height:156px;background:#e3e3e3"></div>
<div class="a" style="left:1731px;top:124px;width:1px;height:437.5px;background:#e3e3e3"></div>
<div class="a" style="left:1731px;top:636px;width:1px;height:156px;background:#e3e3e3"></div>
<div class="a" style="left:1880px;top:124px;width:1px;height:437.5px;background:#e3e3e3"></div>
<div class="a" style="left:1880px;top:636px;width:1px;height:156px;background:#e3e3e3"></div>
<div class="a" style="left:1979px;top:124px;width:1px;height:437.5px;background:#e3e3e3"></div>
<div class="a" style="left:1979px;top:636px;width:1px;height:156px;background:#e3e3e3"></div>
<div class="a" style="left:188px;top:124px;width:1px;height:437px;background:#fff"></div>
<div class="a" style="left:51px;top:792px;width:1942px;height:8px;background:#e3e3e3"></div>
<div class="a" style="left:404px;top:792px;width:1589px;height:7.5px;background:#acacac;border-radius:4px"></div>
<div class="a" style="left:1993px;top:124px;width:9px;height:668px;background:#fff"></div>
<div class="a" style="left:1993px;top:706px;width:9px;height:86px;background:#e3e3e3"></div>
<div class="a" style="left:1994px;top:124px;width:7.5px;height:583px;background:#acacac;border-radius:4px"></div>
<div class="a" style="left:51px;top:800px;width:1951px;height:207px;background:#f3f3f3"></div>
<div class="a" style="left:121px;top:851.5px;width:1850px;height:0;border-top:1px dotted #d8d8d8"></div>
<div class="a" style="left:121px;top:903px;width:1850px;height:0;border-top:1px dotted #d8d8d8"></div>
<div class="a" style="left:121px;top:955px;width:1850px;height:0;border-top:1px dotted #d8d8d8"></div>
<svg class="a" style="left:66px;top:818px;" width="16" height="16" viewBox="0 0 16 16" fill="none"><path d="M3 8 L8 3.5 L13 8 M3 13 L8 8.5 L13 13" stroke="#3a86d8" stroke-width="1.8"/></svg>
<div class="a" style="left:87px;top:811.8px;line-height:30px;font-size:17px;color:#3a86d8;"><span class="c">收起</span></div>
<div class="a" style="left:130.8px;top:811.8px;line-height:30px;font-size:17px;color:#999;-webkit-text-stroke:0"><span class="c">销售量</span>:<span style="color:#222;margin-left:3px">9</span></div>
<div class="a" style="left:406.5px;top:811.8px;line-height:30px;font-size:17px;color:#999;-webkit-text-stroke:0"><span class="c">销售额</span>:<span style="color:#222;margin-left:3px"><span class="c">￥</span>46</span></div>
<div class="a" style="left:681.8px;top:811.8px;line-height:30px;font-size:17px;color:#999;-webkit-text-stroke:0"><span class="c">折后金额</span>:<span style="color:#222;margin-left:3px"><span class="c">￥</span>45.08</span></div>
<div class="a" style="left:957px;top:811.8px;line-height:30px;font-size:17px;color:#999;-webkit-text-stroke:0;"><span class="c">优惠折扣</span>:</div>
<div class="a" style="left:1033px;top:807px;width:175px;height:39px;border:1px solid #e3e3e3;background:#fff"></div>
<div class="a" style="left:1058px;top:812.3px;line-height:30px;font-size:17px;color:#3a86d8;">100</div>
<div class="a" style="left:1232.6px;top:811.8px;line-height:30px;font-size:17px;color:#999;-webkit-text-stroke:0;"><span class="c">优惠金额</span>:</div>
<div class="a" style="left:1308px;top:807px;width:175px;height:39px;border:1px solid #e3e3e3;background:#fff"></div>
<div class="a" style="left:1313px;top:812.3px;line-height:30px;font-size:17px;color:#222;"><span class="c">￥</span></div>
<div class="a" style="left:1333px;top:812.3px;line-height:30px;font-size:17px;color:#3a86d8;">0</div>
<div class="a" style="left:1507.8px;top:811.8px;line-height:30px;font-size:17px;color:#999;-webkit-text-stroke:0;"><span class="c">优惠后金额</span>:</div>
<div class="a" style="left:1601px;top:807px;width:165px;height:39px;border:1px solid #e3e3e3;background:#fff"></div>
<div class="a" style="left:1606px;top:812.3px;line-height:30px;font-size:17px;color:#222;"><span class="c">￥</span></div>
<div class="a" style="left:1626px;top:812.3px;line-height:30px;font-size:17px;color:#3a86d8;">45.08</div>
<div class="a" style="left:130.8px;top:863.8px;line-height:30px;font-size:17px;color:#999;-webkit-text-stroke:0"><span class="c">应付费用</span>:<span style="color:#222;margin-left:3px"><span class="c">￥</span>0</span></div>
<div class="a" style="left:246.5px;top:862.8px;line-height:30px;font-size:17px;color:#3a86d8;"><span class="c">编辑</span></div>
<div class="a" style="left:406.5px;top:863.8px;line-height:30px;font-size:17px;color:#999;-webkit-text-stroke:0"><span class="c">本单金额</span>:<span style="color:#222;margin-left:3px"><span class="c">￥</span>45.08</span></div>
<div class="a" style="left:681.8px;top:863.8px;line-height:30px;font-size:17px;color:#999;-webkit-text-stroke:0"><span class="c">预收金额</span>:<span style="color:#222;margin-left:3px"><span class="c">￥</span>0</span></div>
<div class="a" style="left:797px;top:862.8px;line-height:30px;font-size:17px;color:#3a86d8;"><span class="c">编辑</span></div>
<div class="a" style="left:957px;top:863.8px;line-height:30px;font-size:17px;color:#999;-webkit-text-stroke:0"><span class="c">到账预收款</span>:<span style="color:#222;margin-left:3px"><span class="c">￥</span>0</span></div>
<div class="a" style="left:1232.6px;top:863.8px;line-height:30px;font-size:17px;color:#999;-webkit-text-stroke:0"><span class="c">订单欠款</span>:<span style="color:#222;margin-left:3px"><span class="c">￥</span>45.08</span></div>
<div class="a" style="left:1507.8px;top:863.8px;line-height:30px;font-size:17px;color:#999;-webkit-text-stroke:0"><span class="c">账户总欠款</span>:<span style="color:#222;margin-left:3px"><span class="c">￥</span>0</span></div>
<div class="a" style="left:130.8px;top:915.8px;line-height:30px;font-size:17px;color:#999;-webkit-text-stroke:0"><span class="c">账户余额</span>:<span style="color:#222;margin-left:3px"><span class="c">￥</span>18094.9</span></div>
<div class="a" style="left:406.5px;top:915.8px;line-height:30px;font-size:17px;color:#999;-webkit-text-stroke:0"><span class="c">挂账额度</span>:<span style="color:#222;margin-left:3px"><span class="c">￥</span>10000</span></div>
<div class="a" style="left:130.8px;top:967.8px;line-height:30px;font-size:17px;color:#999;-webkit-text-stroke:0;"><span class="c">收货人</span>:</div>
<div class="a" style="left:188.5px;top:964.5px;width:161px;height:37px;border:1px solid #e3e3e3;background:#fff"></div>
<div class="a" style="left:199.5px;top:968.3px;line-height:30px;font-size:16px;color:#222;"><span class="c">王梓</span></div>
<div class="a" style="left:353px;top:966.8px;line-height:30px;font-size:17px;color:#3a86d8;"><span class="c">选择</span></div>
<div class="a" style="left:406.5px;top:967.8px;line-height:30px;font-size:17px;color:#999;-webkit-text-stroke:0;"><span class="c">收货人电话</span>:</div>
<div class="a" style="left:499px;top:964.5px;width:144px;height:37px;border:1px solid #e3e3e3;background:#fff"></div>
<div class="a" style="left:510px;top:968.3px;line-height:30px;font-size:16px;color:#222;">18150387407</div>
<div class="a" style="left:681.8px;top:967.8px;line-height:30px;font-size:17px;color:#999;-webkit-text-stroke:0;"><span class="c">收货地址</span>:</div>
<div class="a" style="left:754px;top:961.5px;width:729px;height:37px;border:1px solid #e3e3e3;background:#fff"></div>
<div class="a" style="left:765.5px;top:966.3px;line-height:30px;font-size:16px;color:#222;"><span class="c">厦门市思明区环岛东路</span>1801<span class="c">号，中航紫金广场</span>A<span class="c">塔</span></div>
<div class="a" style="left:76.5px;top:1029.3px;line-height:30px;font-size:17px;color:#555;"><span class="c">制单时间：</span>2026-02-10 17:13</div>
<div class="a" style="left:321.8px;top:1029.3px;line-height:30px;font-size:17px;color:#555;"><span class="c">制单人：批发</span>3.0<span class="c">测试账号【勿改】</span></div>
<div class="a" style="left:610px;top:1029.3px;line-height:30px;font-size:17px;color:#555;"><span class="c">销售单号：</span>XSDD-20260210171318-024</div>
<div class="a" style="left:942px;top:1029.3px;line-height:30px;font-size:17px;color:#555"><span class="c">订单归属：</span><span style="color:#3a86d8"><span class="c">批发</span>3.0<span class="c">测试账号【勿改】</span></span></div>
<div class="a" style="left:1247px;top:1029.3px;line-height:30px;font-size:17px;color:#555"><span class="c">订单出库方：</span><span style="color:#3a86d8"><span class="c">仓库出库</span></span></div>
<div class="a" style="left:1677px;top:1018px;width:146.5px;height:49px;border:1px solid #d0d0d0;border-radius:2px;background:#fff"></div>
<div class="a" style="left:1550.5px;width:400px;text-align:center;top:1028.3px;line-height:30px;font-size:17px;color:#333;"><span class="c">保存草稿</span></div>
<div class="a" style="left:1842.5px;top:1018px;width:146.5px;height:49px;background:#3a86d8;border-radius:2px"></div>
<div class="a" style="left:1716px;width:400px;text-align:center;top:1028.3px;line-height:30px;font-size:17px;color:#fff;"><span class="c">开单</span></div>
<div class="a" style="left:1884px;top:113px;width:98px;height:77px;background:#fff;border-radius:3px;box-shadow:0 2px 10px rgba(0,0,0,0.13)"></div>
<div class="a" style="left:1884px;top:113px;width:98px;height:40px;background:#e9f6fd"></div>
<div class="a" style="left:1733px;width:400px;text-align:center;top:118.3px;line-height:30px;font-size:17px;color:#333;"><span class="c">批量改价</span></div>
<div class="a" style="left:1733px;width:400px;text-align:center;top:156.8px;line-height:30px;font-size:17px;color:#333;"><span class="c">批量改仓</span></div>
<div class="a" style="left:1883px;top:113px;width:102px;height:41px;border:4px solid #f5495e;border-radius:6px"></div>
</body></html>
